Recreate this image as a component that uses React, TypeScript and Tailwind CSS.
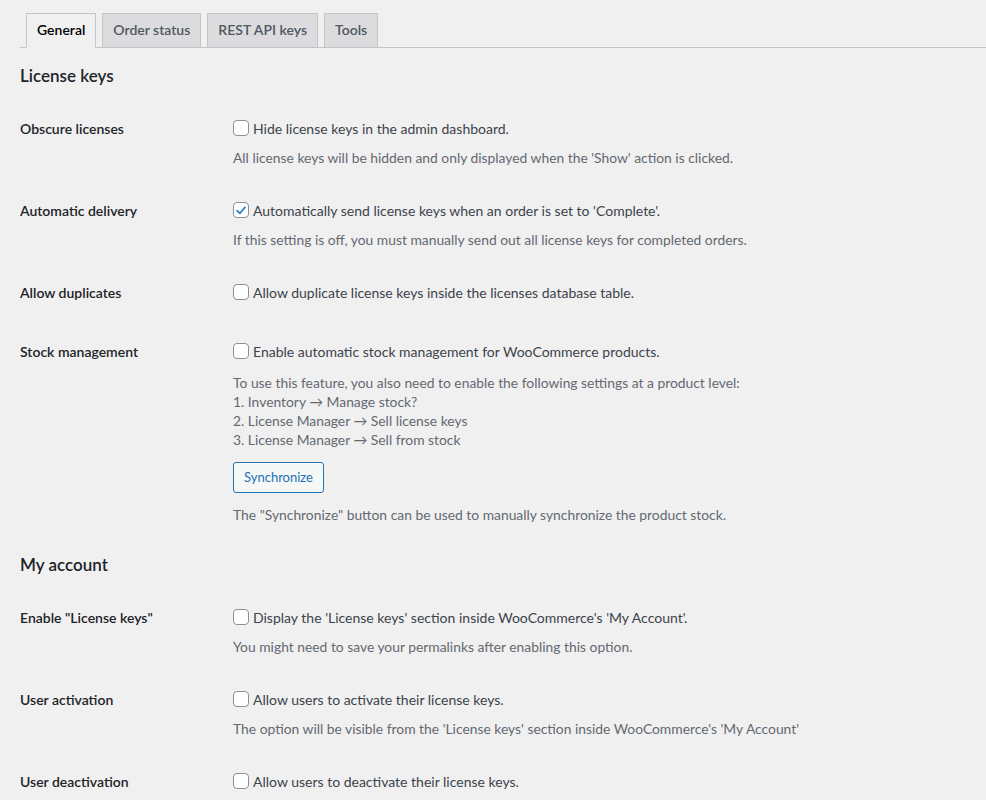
import React from 'react';

type Setting = {
  label: string;
  text: string;
  checked?: boolean;
  description?: React.ReactNode;
  extra?: React.ReactNode;
};

const tabs = ['General', 'Order status', 'REST API keys', 'Tools'];

const Checkbox = ({ checked }: { checked?: boolean }) => (
  <span className="w-4 h-4 shrink-0 rounded-[4px] border border-[#8c8f94] bg-white flex items-center justify-center">
    {checked && (
      <svg viewBox="0 0 20 20" className="w-[15px] h-[15px]">
        <path d="M4.5 10.2 L8.3 14 L15.6 5.6" fill="none" stroke="#3582c4" strokeWidth="2.6" strokeLinecap="round" strokeLinejoin="round" />
      </svg>
    )}
  </span>
);

const SettingRow = ({ setting }: { setting: Setting }) => (
  <div className="grid grid-cols-[213px_1fr] min-h-[59px]">
    <div className="pt-5 text-[14px] leading-[18px] font-semibold text-[#1d2327]">{setting.label}</div>
    <div className="pt-4 pb-[14px]">
      <label className="h-6 flex items-center gap-1 text-[14px] text-[#3c434a]">
        <Checkbox checked={setting.checked} />
        <span>{setting.text}</span>
      </label>
      {setting.description && (
        <div className="mt-2 text-[13.85px] leading-[20px] text-[#646970]">{setting.description}</div>
      )}
      {setting.extra}
    </div>
  </div>
);

const licenseSettings: Setting[] = [
  {
    label: 'Obscure licenses',
    text: 'Hide license keys in the admin dashboard.',
    description: "All license keys will be hidden and only displayed when the 'Show' action is clicked.",
  },
  {
    label: 'Automatic delivery',
    text: "Automatically send license keys when an order is set to 'Complete'.",
    checked: true,
    description: 'If this setting is off, you must manually send out all license keys for completed orders.',
  },
  {
    label: 'Allow duplicates',
    text: 'Allow duplicate license keys inside the licenses database table.',
  },
  {
    label: 'Stock management',
    text: 'Enable automatic stock management for WooCommerce products.',
    description: (
      <div className="pt-[2px] leading-[19px]">
        <div>To use this feature, you also need to enable the following settings at a product level:</div>
        <div>1. Inventory → Manage stock?</div>
        <div>2. License Manager → Sell license keys</div>
        <div>3. License Manager → Sell from stock</div>
      </div>
    ),
    extra: (
      <>
        <button className="mt-[13px] h-[31px] px-[10px] rounded-[3px] border border-[#2271b1] bg-[#f6f7f7] text-[13px] text-[#2271b1]">
          Synchronize
        </button>
        <div className="mt-3 text-[13.85px] leading-[20px] text-[#646970]">
          The "Synchronize" button can be used to manually synchronize the product stock.
        </div>
      </>
    ),
  },
];

const accountSettings: Setting[] = [
  {
    label: 'Enable "License keys"',
    text: "Display the 'License keys' section inside WooCommerce's 'My Account'.",
    description: 'You might need to save your permalinks after enabling this option.',
  },
  {
    label: 'User activation',
    text: 'Allow users to activate their license keys.',
    description: "The option will be visible from the 'License keys' section inside WooCommerce's 'My Account'",
  },
  {
    label: 'User deactivation',
    text: 'Allow users to deactivate their license keys.',
  },
];

export default function App() {
  return (
    <div className="min-h-screen bg-[#f0f0f1] pl-5 font-['Lato','Liberation_Sans',Arial,sans-serif]">
      <nav className="flex pt-[13px] border-b border-[#c3c4c7]">
        {tabs.map((tab, i) => (
          <a
            key={tab}
            className={
              i === 0
                ? 'ml-[6px] -mb-px px-[10px] pt-[4px] pb-[5px] leading-6 text-[14px] font-semibold border border-[#c3c4c7] border-b-[#f0f0f1] bg-[#f0f0f1] text-black'
                : 'ml-[6px] px-[10px] pt-[4px] pb-[5px] leading-6 text-[14px] font-semibold border border-b-0 border-[#c3c4c7] bg-[#dcdcde] text-[#50575e]'
            }
          >
            {tab}
          </a>
        ))}
      </nav>

      <h2 className="mt-4 leading-6 text-[17px] font-semibold text-[#1d2327]">License keys</h2>
      <div className="mt-3">
        {licenseSettings.map(s => (
          <SettingRow key={s.label} setting={s} />
        ))}
      </div>

      <h2 className="mt-[14px] leading-6 text-[17px] font-semibold text-[#1d2327]">My account</h2>
      <div className="mt-3">
        {accountSettings.map(s => (
          <SettingRow key={s.label} setting={s} />
        ))}
      </div>
    </div>
  );
}
